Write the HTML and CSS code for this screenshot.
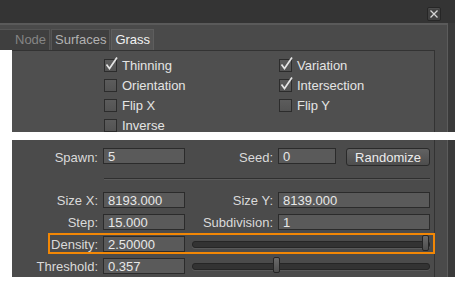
FILE: index.html
```html
<html>
<head>
    <meta charset="UTF-8">
    <title>Grass</title>
    <link rel="stylesheet" href="styles.css">
</head>
<body>
    <div class="shot shot-top">
        <div class="titlebar">
            <button class="close">
                <svg width="14" height="14" viewBox="0 0 14 14"><path d="M3.5 3.5 L10.5 10.5 M10.5 3.5 L3.5 10.5" stroke="#d6d6d6" stroke-width="1.3"/></svg>
            </button>
        </div>
        <div class="frame">
            <div class="tabs">
                <span class="tab tab-first">Node</span>
                <span class="tab">Surfaces</span>
                <span class="tab tab-active">Grass</span>
            </div>
            <div class="top-content">
                <div class="cutout"></div>
                <div class="tab-panel">
                    <div class="checks">
                        <div class="check"><span class="box on"><svg width="15" height="15" viewBox="0 0 15 15"><path d="M2.5 7.5 L5.5 11.5 L13 0.5" fill="none" stroke="#e4e4e4" stroke-width="1.7"/></svg></span>Thinning</div>
                        <div class="check"><span class="box on"><svg width="15" height="15" viewBox="0 0 15 15"><path d="M2.5 7.5 L5.5 11.5 L13 0.5" fill="none" stroke="#e4e4e4" stroke-width="1.7"/></svg></span>Variation</div>
                        <div class="check"><span class="box"></span>Orientation</div>
                        <div class="check"><span class="box on"><svg width="15" height="15" viewBox="0 0 15 15"><path d="M2.5 7.5 L5.5 11.5 L13 0.5" fill="none" stroke="#e4e4e4" stroke-width="1.7"/></svg></span>Intersection</div>
                        <div class="check"><span class="box"></span>Flip X</div>
                        <div class="check"><span class="box"></span>Flip Y</div>
                        <div class="check"><span class="box"></span>Inverse</div>
                    </div>
                </div>
            </div>
        </div>
    </div>

    <div class="shot shot-bottom">
        <div class="frame">
            <div class="lower-panel">
                <div class="row row-spawn">
                    <span class="lbl">Spawn:</span>
                    <span class="field">5</span>
                    <span class="lbl2">Seed:</span>
                    <span class="field field-seed">0</span>
                    <button class="btn">Randomize</button>
                </div>
                <div class="sep"></div>
                <div class="rows">
                    <div class="row">
                        <span class="lbl">Size X:</span>
                        <span class="field">8193.000</span>
                        <span class="lbl2">Size Y:</span>
                        <span class="field field-wide">8139.000</span>
                    </div>
                    <div class="row">
                        <span class="lbl">Step:</span>
                        <span class="field">15.000</span>
                        <span class="lbl2">Subdivision:</span>
                        <span class="field field-wide">1</span>
                    </div>
                    <div class="row row-hl">
                        <span class="lbl">Density:</span>
                        <span class="field">2.50000</span>
                        <div class="slider"><span class="handle" style="left: calc(100% - 7px)"></span></div>
                    </div>
                    <div class="row">
                        <span class="lbl">Threshold:</span>
                        <span class="field">0.357</span>
                        <div class="slider"><span class="handle" style="left: 34%"></span></div>
                    </div>
                </div>
            </div>
        </div>
    </div>
</body>
</html>
```

FILE: styles.css
```css
body {
    margin: 0;
    background: #ffffff;
    font-family: "Liberation Sans", Arial, sans-serif;
    font-size: 13px;
    color: #dedede;
}

.shot {
    width: 455px;
    background-color: #3a3a3a;
    overflow: hidden;
}

.shot-top {
    height: 132px;
    display: flex;
    flex-direction: column;
}

.shot-bottom {
    width: 443px;
    margin: 8px 0 0 12px;
    height: 137px;
    display: flex;
}

.titlebar {
    flex-shrink: 0;
    height: 23px;
    background-color: #343434;
    display: flex;
    justify-content: flex-end;
    align-items: flex-start;
    padding: 7px 14px 0 0;
    box-sizing: border-box;
}

.close {
    width: 14px;
    height: 14px;
    padding: 0;
    border: 1px solid #262626;
    border-radius: 2px;
    background-color: #414141;
    box-shadow: inset 0 1px 0 #4c4c4c;
    display: flex;
}

.close svg {
    margin: -1px;
}

.frame {
    flex: 1;
    min-height: 0;
    display: flex;
    flex-direction: column;
    width: 447px;
    background-color: #4a4a4a;
    border-right: 1px solid #5c5c5c;
}

.shot-top .frame {
    border-top: 2px solid #5a5a5a;
}

.shot-bottom .frame {
    flex: none;
    width: 435px;
}

.tabs {
    flex-shrink: 0;
    display: flex;
    gap: 1px;
    padding-top: 4px;
    height: 21px;
}

.tab {
    height: 21px;
    line-height: 20px;
    padding: 0 3px;
    border: 1px solid #555555;
    border-bottom: none;
    background-color: #3f3f3f;
    color: #b2b2b2;
    box-sizing: border-box;
}

.tab-first {
    padding-left: 15px;
    border-left: none;
    color: #858585;
}

.tab-active {
    background-color: #545454;
    color: #f2f2f2;
    border-color: #5e5e5e;
}

.top-content {
    flex: 1;
    min-height: 0;
    display: flex;
    overflow: hidden;
}

.cutout {
    width: 12px;
    background-color: #ffffff;
}

.tab-panel {
    flex: 1;
    margin-right: 12px;
    background-color: #4f4f4f;
    border-top: 1px solid #333333;
    border-right: 1px solid #333333;
    padding: 4px 0 0 92px;
}

.checks {
    display: grid;
    grid-template-columns: 175px 150px;
    grid-auto-rows: 20px;
}

.check {
    display: flex;
    align-items: center;
    gap: 5px;
    color: #e4e4e4;
}

.box {
    position: relative;
    width: 13px;
    height: 13px;
    box-sizing: border-box;
    border: 1px solid #2c2c2c;
    background: linear-gradient(#5c5c5c, #535353);
}

.box svg {
    position: absolute;
    left: -1px;
    top: -3px;
}

.lower-panel {
    height: 100%;
    width: 423px;
    box-sizing: border-box;
    background-color: #4b4b4b;
    border-right: 1px solid #333333;
    padding: 8px 4px 0 0;
}

.row {
    display: flex;
    align-items: center;
    height: 16px;
    position: relative;
}

.row-spawn {
    height: 18px;
}

.lbl {
    width: 86px;
    margin-right: 5px;
    text-align: right;
    color: #dadada;
}

.lbl2 {
    width: 88px;
    margin-right: 5px;
    text-align: right;
    color: #dadada;
}

.field {
    width: 82px;
    height: 16px;
    line-height: 15px;
    box-sizing: border-box;
    padding-left: 4px;
    border: 1px solid #2b2b2b;
    background-color: #5a5a5a;
    color: #e8e8e8;
}

.row-spawn .field {
    align-self: flex-start;
}

.field-seed {
    width: 58px;
}

.field-wide {
    flex: 1;
}

.btn {
    margin-left: 10px;
    width: 84px;
    height: 18px;
    padding: 0;
    border: 1px solid #2a2a2a;
    border-radius: 3px;
    background: linear-gradient(#626262, #4d4d4d);
    font-family: "Liberation Sans", Arial, sans-serif;
    font-size: 13px;
    color: #ececec;
}

.sep {
    margin: 12px 0 0 92px;
    border-top: 1px solid #2f2f2f;
    border-bottom: 1px solid #5a5a5a;
}

.rows {
    display: flex;
    flex-direction: column;
    gap: 6px;
    margin-top: 12px;
}

.row-hl::after {
    content: "";
    position: absolute;
    left: 36px;
    right: -5px;
    top: -3px;
    bottom: -2px;
    border: 2px solid #f28705;
}

.slider {
    flex: 1;
    margin-left: 7px;
    height: 5px;
    position: relative;
    border: 1px solid #262626;
    border-radius: 3px;
    background-color: #333333;
    box-shadow: 0 1px 0 #5a5a5a;
}

.handle {
    position: absolute;
    top: -7px;
    width: 7px;
    height: 16px;
    box-sizing: border-box;
    border: 1px solid #252525;
    border-radius: 2px;
    background: linear-gradient(#6a6a6a, #4e4e4e);
}
```
